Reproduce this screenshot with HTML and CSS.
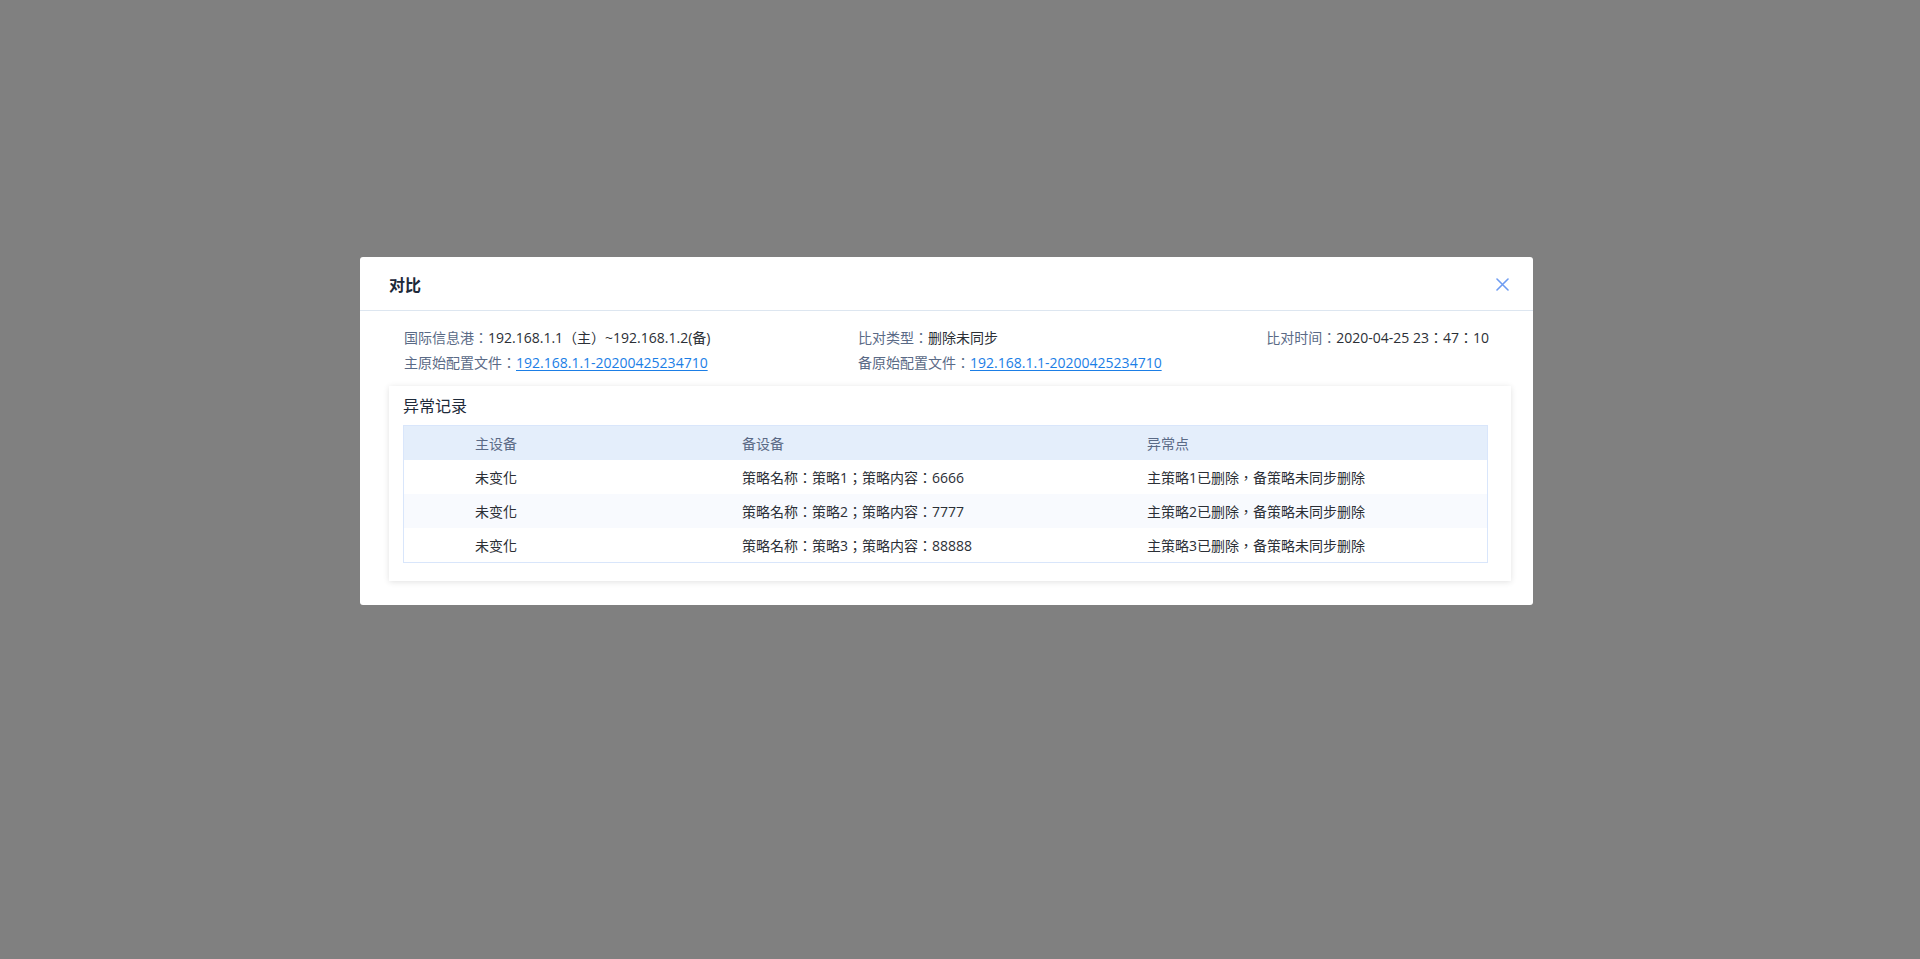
FILE: index.html
```html
<!DOCTYPE html>
<html lang="zh-CN">
<head>
<meta charset="utf-8">
<title>对比</title>
<link rel="stylesheet" href="styles.css">
</head>
<body>
<div class="mask">
  <div class="modal">
    <div class="modal-header">
      <span class="modal-title">对比</span>
      <span class="close" aria-label="关闭">
        <svg width="13" height="13" viewBox="0 0 13 13"><path d="M1 1 L12 12 M12 1 L1 12" stroke="#6e9cf2" stroke-width="1.6" stroke-linecap="round" fill="none"/></svg>
      </span>
    </div>
    <div class="modal-body">
      <div class="info">
        <div class="info-item"><span class="label">国际信息港：</span><span class="value">192.168.1.1（主）~192.168.1.2(备)</span></div>
        <div class="info-item"><span class="label">比对类型：</span><span class="value">删除未同步</span></div>
        <div class="info-item right"><span class="label">比对时间：</span><span class="value">2020-04-25 23：47：10</span></div>
        <div class="info-item"><span class="label">主原始配置文件：</span><a class="link" href="#">192.168.1.1-20200425234710</a></div>
        <div class="info-item"><span class="label">备原始配置文件：</span><a class="link" href="#">192.168.1.1-20200425234710</a></div>
        <div class="info-item right"></div>
      </div>
      <div class="card">
        <div class="card-title">异常记录</div>
        <div class="table">
          <div class="row head">
            <div class="cell c0"></div>
            <div class="cell c1">主设备</div>
            <div class="cell c2">备设备</div>
            <div class="cell c3">异常点</div>
          </div>
          <div class="row">
            <div class="cell c0"></div>
            <div class="cell c1">未变化</div>
            <div class="cell c2">策略名称：策略1；策略内容：6666</div>
            <div class="cell c3">主策略1已删除，备策略未同步删除</div>
          </div>
          <div class="row stripe">
            <div class="cell c0"></div>
            <div class="cell c1">未变化</div>
            <div class="cell c2">策略名称：策略2；策略内容：7777</div>
            <div class="cell c3">主策略2已删除，备策略未同步删除</div>
          </div>
          <div class="row">
            <div class="cell c0"></div>
            <div class="cell c1">未变化</div>
            <div class="cell c2">策略名称：策略3；策略内容：88888</div>
            <div class="cell c3">主策略3已删除，备策略未同步删除</div>
          </div>
        </div>
      </div>
    </div>
  </div>
</div>
</body>
</html>
```

FILE: styles.css
```css
* { box-sizing: border-box; }
html, body {
  margin: 0;
  padding: 0;
  height: 100%;
}
body {
  background: #808080;
  font-family: "Open Sans", "Noto Sans CJK TC", sans-serif;
  font-feature-settings: "locl" 0;
  font-size: 14px;
  color: #2b2f36;
}
.mask {
  width: 1920px;
  height: 959px;
  padding: 257px 0 0 360px;
}
.modal {
  width: 1173px;
  background: #fff;
  border-radius: 3px;
}
.modal-header {
  height: 54px;
  display: flex;
  align-items: center;
  justify-content: space-between;
  padding: 0 24px 0 29px;
  border-bottom: 1px solid #dde6f0;
}
.modal-title {
  font-size: 16px;
  font-weight: bold;
  color: #1e2a3a;
  font-family: "Noto Sans CJK SC", sans-serif;
}
.close {
  display: flex;
  width: 13px;
  height: 13px;
  margin-top: 1px;
}
.modal-body {
  padding: 14px 22px 24px 29px;
}
.info {
  display: grid;
  grid-template-columns: 454px 1fr auto;
  padding-left: 15px;
  padding-right: 22px;
  line-height: 25px;
  margin-bottom: 11px;
}
.info-item.right { text-align: right; }
.label { color: #5a6a86; }
.value { color: #2b2f36; }
.link {
  color: #1b7ee6;
  text-decoration: underline;
  text-underline-offset: 2px;
}
.card {
  background: #fff;
  box-shadow: 0 1px 6px rgba(0, 0, 0, 0.12);
  padding: 7px 23px 18px 14px;
}
.card-title {
  font-size: 16px;
  line-height: 24px;
  color: #1e2a3a;
  margin-bottom: 8px;
  font-family: "Noto Sans CJK SC", sans-serif;
}
.table {
  border: 1px solid #d9e6fb;
}
.row {
  display: grid;
  grid-template-columns: 59px 267px 405px 1fr;
  height: 34px;
  align-items: center;
  background: #fff;
}
.row.head {
  background: #e4eefb;
  color: #5a6a86;
}
.row.stripe { background: #f8fafe; }
.cell {
  padding-left: 12px;
  white-space: nowrap;
}
```
